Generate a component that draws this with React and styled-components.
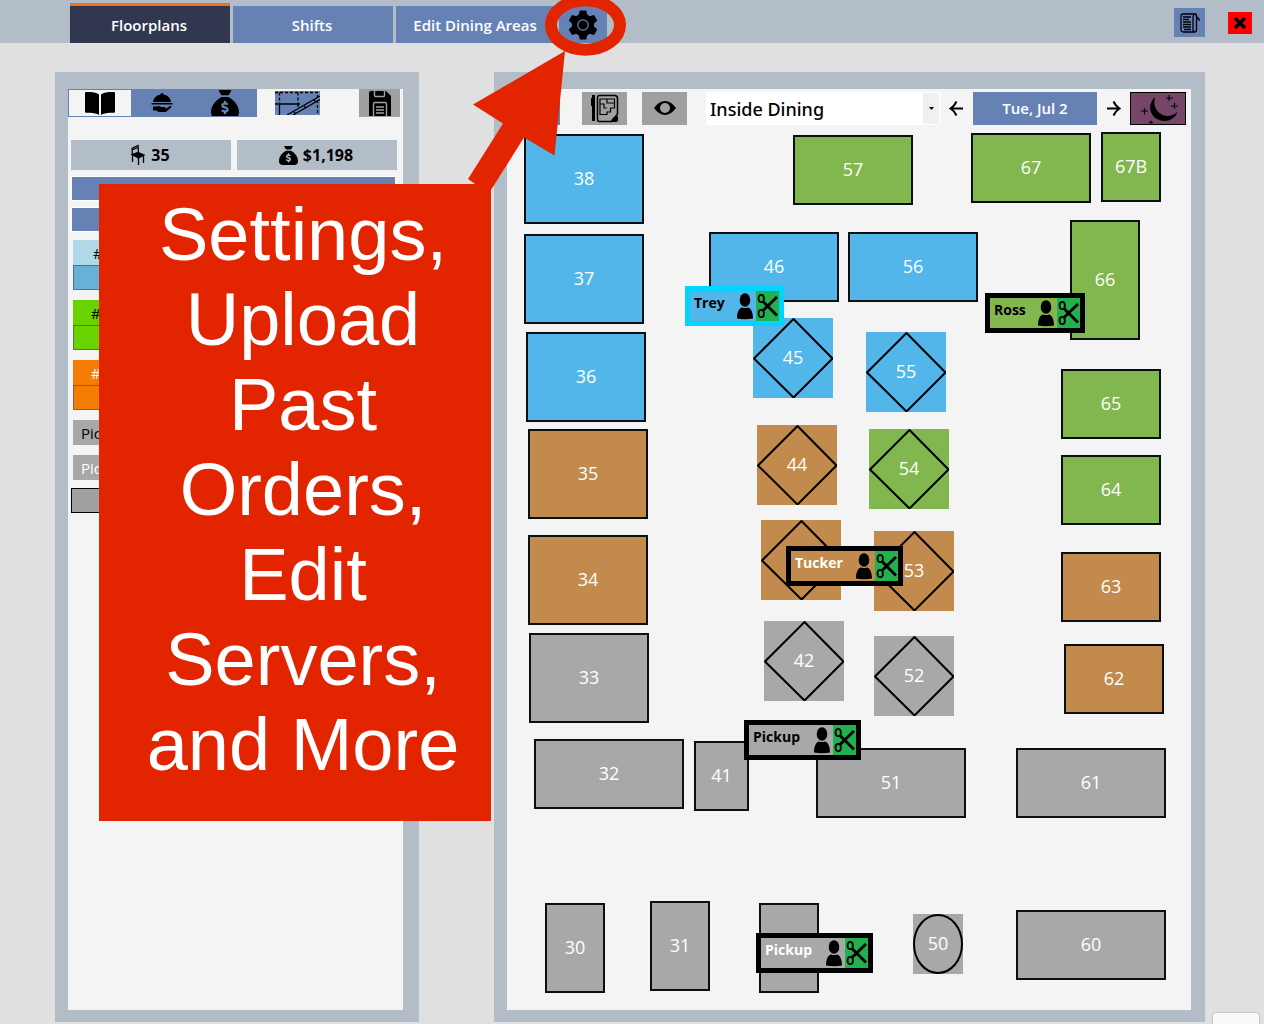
import React from "react";
import styled, { createGlobalStyle } from "styled-components";
import { FaSackDollar } from "react-icons/fa6";

const c = {
  page: "#e0e0e0",
  frame: "#b3bdc8",
  surface: "#f4f4f4",
  accent: "#6682b4",
  grey: "#a0a0a0",
  red: "#e22400",
};

const GlobalStyle = createGlobalStyle`
  * { box-sizing: border-box; }
  body { margin: 0; background: ${c.page}; font-family: "Open Sans", "Noto Sans", sans-serif; color: #000; }
  button, select { font: inherit; color: inherit; border: 0; padding: 0; margin: 0; border-radius: 0; cursor: pointer; }
  svg { display: block; flex: none; }
`;

const Page = styled.div`
  position: relative;
  overflow: hidden;
`;

const Header = styled.header`
  display: flex;
  justify-content: space-between;
  min-height: 43px;
  padding: 0 12px 0 70px;
  background: ${c.frame};
`;

const Nav = styled.nav`
  display: flex;
  align-items: flex-end;
  gap: 3px;
`;

const NavTab = styled.button`
  width: 160px;
  height: ${(p) => (p.$active ? 40 : 37)}px;
  padding-right: 2px;
  border-top: ${(p) => (p.$active ? "3px solid #ef7318" : "0")};
  background: ${(p) => (p.$active ? "#30374f" : c.accent)};
  color: #fff;
  font-size: 15px;
  font-weight: 600;
`;

const GearButton = styled.button`
  display: grid;
  place-items: center;
  width: 48px;
  height: 37px;
  background: ${c.accent};
`;

const WindowActions = styled.div`
  display: flex;
  align-items: center;
  gap: 23px;
  padding-top: 2px;
`;

const HeaderButton = styled.button`
  display: grid;
  place-items: center;
  width: ${(p) => p.$size}px;
  height: ${(p) => p.$size - 2}px;
  background: ${(p) => p.$bg};
`;

const Main = styled.main`
  display: flex;
  gap: 75px;
  padding: 29px 59px 2px 55px;
`;

const Panel = styled.section`
  display: flex;
  flex: ${(p) => (p.$grow ? "1 1 0" : "0 0 364px")};
  padding: 17px ${(p) => (p.$grow ? 14 : 16)}px 12px 13px;
  background: ${c.frame};
`;

const Surface = styled.div`
  flex: 1;
  min-width: 0;
  background: ${c.surface};
`;

const SideToolbar = styled.div`
  display: flex;
  align-items: center;
  justify-content: space-between;
  height: 28px;
  padding-right: 3px;
`;

const SideTools = styled.div`
  display: flex;
  align-items: center;
  gap: 18px;
`;

const ViewTabs = styled.div`
  display: flex;
  width: 189px;
  height: 28px;
  border: 1px solid ${c.accent};
`;

const ViewTab = styled.button`
  display: grid;
  place-items: center;
  flex: 1;
  overflow: hidden;
  background: ${(p) => (p.$active ? c.surface : c.accent)};
`;

const PlainTool = styled.button`
  display: grid;
  place-items: center;
  width: ${(p) => p.$w}px;
  height: ${(p) => p.$h}px;
  background: ${(p) => p.$bg};
  overflow: hidden;
`;

const Stats = styled.div`
  display: flex;
  gap: 6px;
  padding: 23px 6px 0 3px;
`;

const Stat = styled.div`
  display: flex;
  flex: 1;
  align-items: center;
  justify-content: center;
  gap: 5px;
  height: 30px;
  padding-right: 2px;
  background: ${c.frame};
  font-size: 16px;
  font-weight: 700;
`;

const SideActions = styled.div`
  display: grid;
  gap: 6px;
  padding: 6px 7px 0 3px;
`;

const BarButton = styled.button`
  height: 25px;
  border: 1px solid #fff;
  background: ${c.accent};
`;

const Sections = styled.ul`
  display: grid;
  gap: 10px;
  margin: 0;
  padding: 8px 8px 0 5px;
  list-style: none;
`;

const SectionItem = styled.li`
  background: ${(p) => p.$bg};
  color: ${(p) => p.$color};
`;

const SectionTitle = styled.div`
  height: 25px;
  padding-left: ${(p) => p.$indent}px;
  font-size: 15px;
  font-weight: 500;
  line-height: 26px;
`;

const SectionSlot = styled.div`
  height: 25px;
  border: 1px solid rgba(80, 90, 100, 0.75);
  background: ${(p) => p.$bg};
`;

const AddSection = styled.div`
  padding: 8px 8px 0 3px;
  button {
    display: block;
    width: 100%;
    height: 25px;
    border: 1px solid #000;
    background: ${c.grey};
  }
`;

const FloorToolbar = styled.div`
  display: flex;
  align-items: center;
  gap: 19px;
  height: 38px;
  padding: 0 5px 0 8px;
`;

const FloorTools = styled.div`
  display: flex;
  gap: 15px;
  margin-left: ${(p) => p.$offset || 0}px;
`;

const DateNav = styled.div`
  display: flex;
  flex: 1;
  align-items: center;
  gap: 9px;
`;

const AreaPicker = styled.label`
  position: relative;
  flex: 1;
  height: 33px;
  select {
    width: 100%;
    height: 100%;
    padding: 2px 20px 0 4px;
    appearance: none;
    background: #fff;
    font-family: "Noto Sans", "Open Sans", sans-serif;
    font-size: 18px;
    font-weight: 500;
  }
`;

const PickerArrow = styled.span`
  position: absolute;
  top: 1px;
  right: 1px;
  bottom: 1px;
  display: grid;
  place-items: center;
  width: 16px;
  background: #f0f0f0;
  pointer-events: none;
`;

const StepButton = styled.button`
  width: 15px;
  background: none;
`;

const DateButton = styled.button`
  width: 124px;
  height: 33px;
  background: ${c.accent};
  color: #fff;
  font-size: 15px;
  font-weight: 600;
`;

const NightButton = styled.button`
  width: 56px;
  height: 33px;
  border: 1px solid #000;
  background: #754668;
`;

const Floor = styled.div`
  position: relative;
  height: 883px;
`;

const fills = { blue: "#52b6eb", green: "#82b64f", brown: "#c28a4c", grey: "#a8a8a8" };

const Table = styled.button`
  position: absolute;
  left: ${(p) => p.$x}px;
  top: ${(p) => p.$y}px;
  display: grid;
  place-items: center;
  width: ${(p) => p.$w}px;
  height: ${(p) => p.$h}px;
  border: ${(p) => (p.$outlined ? "2px solid #0a0f12" : "0")};
  background: ${(p) => fills[p.$fill]};
  color: #fff;
  font-size: 18px;
  font-weight: 400;
  svg, span { grid-area: 1 / 1; }
  span { padding-bottom: 2px; }
`;

const Tag = styled.div`
  position: absolute;
  left: ${(p) => p.$x}px;
  top: ${(p) => p.$y}px;
  display: flex;
  width: ${(p) => p.$w}px;
  height: 40px;
  border: 5px solid ${(p) => p.$border};
  background: ${(p) => fills[p.$fill]};
  color: ${(p) => p.$color};
`;

const TagName = styled.span`
  flex: 1;
  padding-left: 4px;
  font-size: 14px;
  font-weight: 700;
  line-height: 24px;
`;

const TagButton = styled.button`
  display: grid;
  place-items: center;
  width: 23px;
  height: 30px;
  background: ${(p) => p.$bg || "transparent"};
`;

const Annotation = styled.div`
  position: absolute;
  top: 0;
  left: 0;
  pointer-events: none;
`;

const Callout = styled.p`
  position: absolute;
  top: 184px;
  left: 99px;
  width: 392px;
  margin: 0;
  padding: 8px 0 34px 16px;
  background: ${c.red};
  color: #fff;
  font-family: "Liberation Sans", Helvetica, Arial, sans-serif;
  font-size: 74px;
  line-height: 85px;
  text-align: center;
`;

const CornerChip = styled.div`
  position: absolute;
  right: 4px;
  bottom: 0;
  width: 48px;
  height: 12px;
  border: 1px solid #c8c8c8;
  border-bottom: 0;
  border-radius: 4px 4px 0 0;
  background: #fafafa;
`;

const GearIcon = () => (
  <svg width="30" height="30" viewBox="-15 -15 30 30">
    <circle r="11" />
    {[0, 60, 120, 180, 240, 300].map((a) => (
      <path key={a} d="M-4.6 -9 L-3.2 -14.6 H3.2 L4.6 -9Z" transform={`rotate(${a})`} />
    ))}
    <circle r="5.2" fill="none" stroke={c.accent} strokeWidth="1.2" />
  </svg>
);

const NotesIcon = () => (
  <svg width="20" height="20" viewBox="0 0 20 20" fill="none" stroke="#000" strokeWidth="1.3">
    <path d="M3 1h11.5q-1.5 1-1.5 3v12.500q0 2.500 2 2.500H3.500Q1 19 1 16.500V3Q1 1 3 1zM14.500 1q2 0 2 2.500v13q0 2.500-2 2.500M16.500 3.500l2.500 2.500v2M16.500 5.500h2" />
    <path d="M3 4h8M3 6.500h6M3 9h8M3 11.500h8M3 14h8M4 16.500h7" />
  </svg>
);

const CloseIcon = () => (
  <svg width="12" height="12" viewBox="0 0 12 12" stroke="#000" strokeWidth="3.600">
    <path d="M1 1l10 10M11 1L1 11" />
  </svg>
);

const BookIcon = () => (
  <svg width="32" height="26" viewBox="0 0 32 26">
    <path d="M1 3q0-1 1-1h4q6 0 9 2.500V25q-3-2-9-2.200H2q-1 0-1-1zM31 3q0-1-1-1h-4q-6 0-9 2.500V25q3-2 9-2.200h4q1 0 1-1z" />
  </svg>
);

const ServeIcon = () => (
  <svg width="22" height="22" viewBox="0 0 22 22">
    <path d="M9.500 2.500a1.500 1.500 0 0 1 3 0Q19.500 4 20 10H2Q2.500 4 9.500 2.500zM.5 11h21v1.500H.5zM2 14.500h3q3-1 5 .5h4q1.500.5 0 1.500h-4 5l4-2.500q2-.5 1.500 1l-5 4.500q-1 .7-3 .5H8l-3-1.500H2z" />
  </svg>
);

const MapIcon = () => (
  <svg width="45" height="24" viewBox="0 0 45 24" fill="none" stroke="#000" strokeWidth="1.300">
    <path d="M0 1.500h45M4.500 1.500V12M23 1.500V12M42.500 4v20" strokeDasharray="3 2" />
    <path d="M0 13h25M4.500 13v11M23 12v4M12 24L45 5M18 24L45 8.500" />
    <path d="M19 21l2 2M29 15l2 2M39 9l2 2" />
  </svg>
);

const SaveIcon = () => (
  <svg width="24" height="28" viewBox="0 0 24 28">
    <path d="M1 4q0-2 2-2h15l5 5v20H1z" />
    <path d="M6.500 1v5.500q0 1 1 1h8q1 0 1-1V1M5.500 28V15q0-1.500 1.500-1.500h10q1.500 0 1.500 1.500v13" fill="none" stroke={c.grey} strokeWidth="1.400" />
    <path d="M8 18h8M8 21h8M8 24h8" stroke={c.grey} strokeWidth="1.400" />
  </svg>
);

const ChairIcon = () => (
  <svg width="16" height="22" viewBox="0 0 16 22" fill="none" stroke="#000" strokeWidth="1.300">
    <path d="M2.500 10.500L2 4.500L8 1.500l.5 8M2 6l6-2.500M2.500 11v7M8.500 14v7M13.500 11v8" />
    <path d="M2 10.500L8 8.500l6 2.500-5.500 3z" fill="#000" />
  </svg>
);

const PlanIcon = () => (
  <svg width="28" height="29" viewBox="0 0 28 29" fill="none" stroke="#000" strokeWidth="1.500">
    <path d="M8.500 1.500h15q3 0 3 3V20l-6 7.500h-12q-2 0-2-2v-22q0-2 2-2z" />
    <path d="M9 5h14.500v9h-4v4H16v2.500H9zM9 10h4v4h3M16 5v4h7" strokeWidth="1.200" />
    <path d="M20 28q1-5.500 7-6v4q0 2-2 2z" fill="#000" stroke="none" />
    <path d="M2.500 1v20M2.500 20v7" strokeWidth="3" />
    <path d="M.5 4v8" strokeWidth="1" />
  </svg>
);

const EyeIcon = () => (
  <svg width="22" height="14" viewBox="0 0 22 14">
    <path fillRule="evenodd" d="M0 7Q5 0 11 0t11 7q-5 7-11 7T0 7zm11-5a5 5 0 1 0 0 10 5 5 0 0 0 0-10z" />
  </svg>
);

const ArrowIcon = ({ flip }) => (
  <svg width="15" height="17" viewBox="0 0 15 17" fill="none" stroke="#000" strokeWidth="2">
    <path d={flip ? "M1 8.500h12.500M7.500 1.500q2 4.500 6 7q-4 2.500-6 7" : "M14 8.500H1.500M7.500 1.500q-2 4.500-6 7q4 2.500 6 7"} />
  </svg>
);

const MoonIcon = () => (
  <svg width="54" height="31" viewBox="0 0 54 31">
    <path d="M24 4C16 12 19 22 26 26c7 4 17 2 20.500-7-6 5-13 5-18 1-5-4-6-10-4.500-16z" />
    <path d="M38 2v6M35 5h7M43.500 9.500v6.500M40 13h7M13.500 15v6.500M10 18h7M20 27.500v3M18 29.500h4" stroke="#000" strokeWidth="1.100" />
  </svg>
);

const PersonIcon = () => (
  <svg width="18" height="28" viewBox="0 0 18 28">
    <ellipse cx="9" cy="8" rx="5.300" ry="6.800" />
    <path d="M1 26.500C1 19 4 15.500 6 15.500q3 1.200 6 0c2 0 5 3.500 5 11q-8 1.500-16 0z" />
  </svg>
);

const ScissorsIcon = () => (
  <svg width="21" height="26" viewBox="0 0 21 26" fill="none" stroke="#000">
    <path d="M6 8.500L20 22.500M6 17.500L20 4" strokeWidth="3" />
    <ellipse cx="4.200" cy="5.500" rx="2.700" ry="3.700" strokeWidth="1.800" />
    <ellipse cx="4.200" cy="20.500" rx="2.700" ry="3.700" strokeWidth="1.800" />
  </svg>
);

const Diamond = () => (
  <svg width="80" height="80" viewBox="0 0 80 80" fill="none" stroke="#000" strokeWidth="2">
    <path d="M40.500 1L79.500 40.500L40.500 79.500L1 40.500z" />
  </svg>
);

const Oval = () => (
  <svg width="50" height="60" viewBox="0 0 50 60" fill="none" stroke="#000" strokeWidth="2">
    <ellipse cx="25" cy="30" rx="24" ry="29" />
  </svg>
);

const tables = [
  ["38", 17, 7, 120, 90, "blue"],
  ["37", 17, 107, 120, 90, "blue"],
  ["36", 19, 205, 120, 90, "blue"],
  ["35", 21, 302, 120, 90, "brown"],
  ["34", 21, 408, 120, 90, "brown"],
  ["33", 22, 506, 120, 90, "grey"],
  ["32", 27, 612, 150, 70, "grey"],
  ["41", 187, 614, 55, 70, "grey"],
  ["51", 309, 621, 150, 70, "grey"],
  ["61", 509, 621, 150, 70, "grey"],
  ["30", 38, 776, 60, 90, "grey"],
  ["31", 143, 774, 60, 90, "grey"],
  ["", 252, 776, 60, 90, "grey"],
  ["50", 406, 787, 50, 60, "grey", "oval"],
  ["60", 509, 783, 150, 70, "grey"],
  ["57", 286, 8, 120, 70, "green"],
  ["67", 464, 6, 120, 70, "green"],
  ["67B", 594, 5, 60, 70, "green"],
  ["46", 202, 105, 130, 70, "blue"],
  ["56", 341, 105, 130, 70, "blue"],
  ["66", 563, 93, 70, 120, "green"],
  ["65", 554, 242, 100, 70, "green"],
  ["64", 554, 328, 100, 70, "green"],
  ["63", 554, 425, 100, 70, "brown"],
  ["62", 557, 517, 100, 70, "brown"],
  ["45", 246, 191, 80, 80, "blue", "diamond"],
  ["55", 359, 205, 80, 80, "blue", "diamond"],
  ["44", 250, 298, 80, 80, "brown", "diamond"],
  ["54", 362, 302, 80, 80, "green", "diamond"],
  ["", 254, 393, 80, 80, "brown", "diamond"],
  ["53", 367, 404, 80, 80, "brown", "diamond"],
  ["42", 257, 494, 80, 80, "grey", "diamond"],
  ["52", 367, 509, 80, 80, "grey", "diamond"],
];

const tags = [
  { name: "Trey", x: 178, y: 159, w: 99, fill: "blue", color: "#000", border: "#00d4ff" },
  { name: "Ross", x: 478, y: 166, w: 100, fill: "green", color: "#000", border: "#000" },
  { name: "Tucker", x: 279, y: 419, w: 117, fill: "brown", color: "#fff", border: "#000" },
  { name: "Pickup", x: 237, y: 593, w: 117, fill: "grey", color: "#000", border: "#000" },
  { name: "Pickup", x: 249, y: 806, w: 117, fill: "grey", color: "#fff", border: "#000" },
];

const sections = [
  { title: "#", indent: 20, bg: "#b0d9ea", slot: "#67b0d8", color: "#000" },
  { title: "#", indent: 18, bg: "#6ad200", slot: "#6ad200", color: "#000" },
  { title: "#", indent: 18, bg: "#f57c05", slot: "#f57c05", color: "#fff" },
  { title: "Pickup", indent: 8, bg: "#a8a8a8", color: "#000" },
  { title: "Pickup", indent: 8, bg: "#a8a8a8", color: "#fff" },
];

export default function App() {
  return (
    <Page>
      <GlobalStyle />
      <Header>
        <Nav>
          <NavTab $active>Floorplans</NavTab>
          <NavTab>Shifts</NavTab>
          <NavTab>Edit Dining Areas</NavTab>
          <GearButton aria-label="Settings"><GearIcon /></GearButton>
        </Nav>
        <WindowActions>
          <HeaderButton $size={31} $bg={c.accent} aria-label="Notes"><NotesIcon /></HeaderButton>
          <HeaderButton $size={24} $bg="#ff0000" aria-label="Close"><CloseIcon /></HeaderButton>
        </WindowActions>
      </Header>

      <Main>
        <Panel>
          <Surface>
            <SideToolbar>
              <SideTools>
                <ViewTabs>
                  <ViewTab $active aria-label="Book"><BookIcon /></ViewTab>
                  <ViewTab aria-label="Servers"><ServeIcon /></ViewTab>
                  <ViewTab aria-label="Sales"><FaSackDollar size={28} /></ViewTab>
                </ViewTabs>
                <PlainTool $w={45} $h={24} $bg={c.accent} aria-label="Section lines"><MapIcon /></PlainTool>
              </SideTools>
              <PlainTool $w={41} $h={28} $bg={c.grey} aria-label="Save"><SaveIcon /></PlainTool>
            </SideToolbar>
            <Stats>
              <Stat><ChairIcon />35</Stat>
              <Stat><FaSackDollar size={19} />$1,198</Stat>
            </Stats>
            <SideActions>
              <BarButton aria-label="Add server" />
              <BarButton aria-label="Auto assign" />
            </SideActions>
            <Sections>
              {sections.map((s, i) => (
                <SectionItem key={i} $bg={s.bg} $color={s.color}>
                  <SectionTitle $indent={s.indent}>{s.title}</SectionTitle>
                  {s.slot && <SectionSlot $bg={s.slot} />}
                </SectionItem>
              ))}
            </Sections>
            <AddSection><button aria-label="Add section" /></AddSection>
          </Surface>
        </Panel>

        <Panel $grow>
          <Surface>
            <FloorToolbar>
              <FloorTools>
                <PlainTool $w={45} $h={33} $bg={c.accent} aria-label="Layout" />
              </FloorTools>
              <FloorTools $offset={3}>
                <PlainTool $w={45} $h={33} $bg={c.grey} aria-label="Edit plan"><PlanIcon /></PlainTool>
                <PlainTool $w={45} $h={33} $bg={c.grey} aria-label="Show"><EyeIcon /></PlainTool>
              </FloorTools>
              <DateNav>
                <AreaPicker>
                  <select aria-label="Dining area" defaultValue="Inside Dining">
                    <option>Inside Dining</option>
                  </select>
                  <PickerArrow>
                    <svg width="5" height="3" viewBox="0 0 5 3"><path d="M0 0h5L2.500 3z" /></svg>
                  </PickerArrow>
                </AreaPicker>
                <StepButton aria-label="Previous day"><ArrowIcon /></StepButton>
                <DateButton>Tue, Jul 2</DateButton>
                <StepButton aria-label="Next day"><ArrowIcon flip /></StepButton>
                <NightButton aria-label="Night shift"><MoonIcon /></NightButton>
              </DateNav>
            </FloorToolbar>
            <Floor>
              {tables.map(([id, x, y, w, h, fill, shape], i) => (
                <Table key={i} $x={x} $y={y} $w={w} $h={h} $fill={fill} $outlined={!shape}>
                  {shape === "diamond" && <Diamond />}
                  {shape === "oval" && <Oval />}
                  {id && <span>{id}</span>}
                </Table>
              ))}
              {tags.map((t, i) => (
                <Tag key={i} $x={t.x} $y={t.y} $w={t.w} $fill={t.fill} $color={t.color} $border={t.border}>
                  <TagName>{t.name}</TagName>
                  <TagButton aria-label="Server"><PersonIcon /></TagButton>
                  <TagButton $bg="#22b050" aria-label="Cut"><ScissorsIcon /></TagButton>
                </Tag>
              ))}
            </Floor>
          </Surface>
        </Panel>
      </Main>

      <Annotation>
        <svg width="640" height="200" viewBox="0 0 640 200" fill={c.red}>
          <ellipse cx="585.500" cy="25" rx="34.500" ry="24.700" fill="none" stroke={c.red} strokeWidth="12" />
          <path d="M565 51L473 104.500L503 123.500L468 179L478 186V200H485L491 190L524 137.500L554.500 155.500z" />
        </svg>
        <Callout>Settings, Upload Past Orders, Edit Servers, and More</Callout>
      </Annotation>
      <CornerChip />
    </Page>
  );
}
